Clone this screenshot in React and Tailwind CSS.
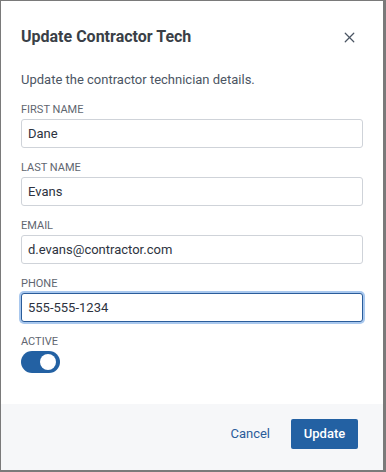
import { X } from 'lucide-react';

const fields = [
  { label: 'First Name', value: 'Dane' },
  { label: 'Last Name', value: 'Evans' },
  { label: 'Email', value: 'd.evans@contractor.com' },
  { label: 'Phone', value: '555-555-1234', focused: true },
];

export default function App() {
  return (
    <div className="h-[472px] w-[386px] bg-[#7a7a7a] pl-[1px] pt-[1px] font-['Roboto',sans-serif]">
      <div className="flex h-[469px] w-[382px] flex-col bg-white">
        {/* Header */}
        <div className="flex items-center justify-between px-5 pt-6">
          <h2 className="text-base font-bold leading-6 text-[#3a3f47]">Update Contractor Tech</h2>
          <button className="mr-[5px] text-[#4b5563]">
            <X className="h-[17px] w-[17px]" strokeWidth={1.75} />
          </button>
        </div>

        {/* Body */}
        <div className="flex-1 px-5">
          <p className="mt-[21px] text-[13px] leading-5 text-[#4b5563]">
            Update the contractor technician details.
          </p>

          <div className="mt-[13px] flex flex-col gap-[13px]">
            {fields.map((f) => (
              <div key={f.label}>
                <label className="mb-[2px] block text-[11px] uppercase leading-[14px] text-[#5f6670]">
                  {f.label}
                </label>
                <input
                  readOnly
                  value={f.value}
                  className={`block h-[29px] w-full rounded-[3px] border bg-white px-[6px] text-[13px] text-[#2d3340] outline-none ${
                    f.focused
                      ? 'border-[#2a5c9a] ring-2 ring-[#a9c8ee]'
                      : 'border-[#cfd3d9]'
                  }`}
                />
              </div>
            ))}

            <div>
              <label className="mb-[2px] block text-[11px] uppercase leading-[14px] text-[#5f6670]">
                Active
              </label>
              <div className="flex h-[22px] w-[39px] items-center justify-end rounded-full bg-[#2361a3] pr-[4px]">
                <span className="h-[16px] w-[16px] rounded-full bg-white" />
              </div>
            </div>
          </div>
        </div>

        {/* Footer */}
        <div className="flex h-[66px] items-start justify-end gap-[21px] bg-[#f6f7f9] pr-[25px] pt-[15px]">
          <button className="h-[30px] text-[13px] text-[#2a5c9a]">Cancel</button>
          <button className="h-[30px] w-[67px] rounded-[2px] bg-[#2361a3] text-[13px] font-medium text-white">
            Update
          </button>
        </div>
      </div>
    </div>
  );
}
